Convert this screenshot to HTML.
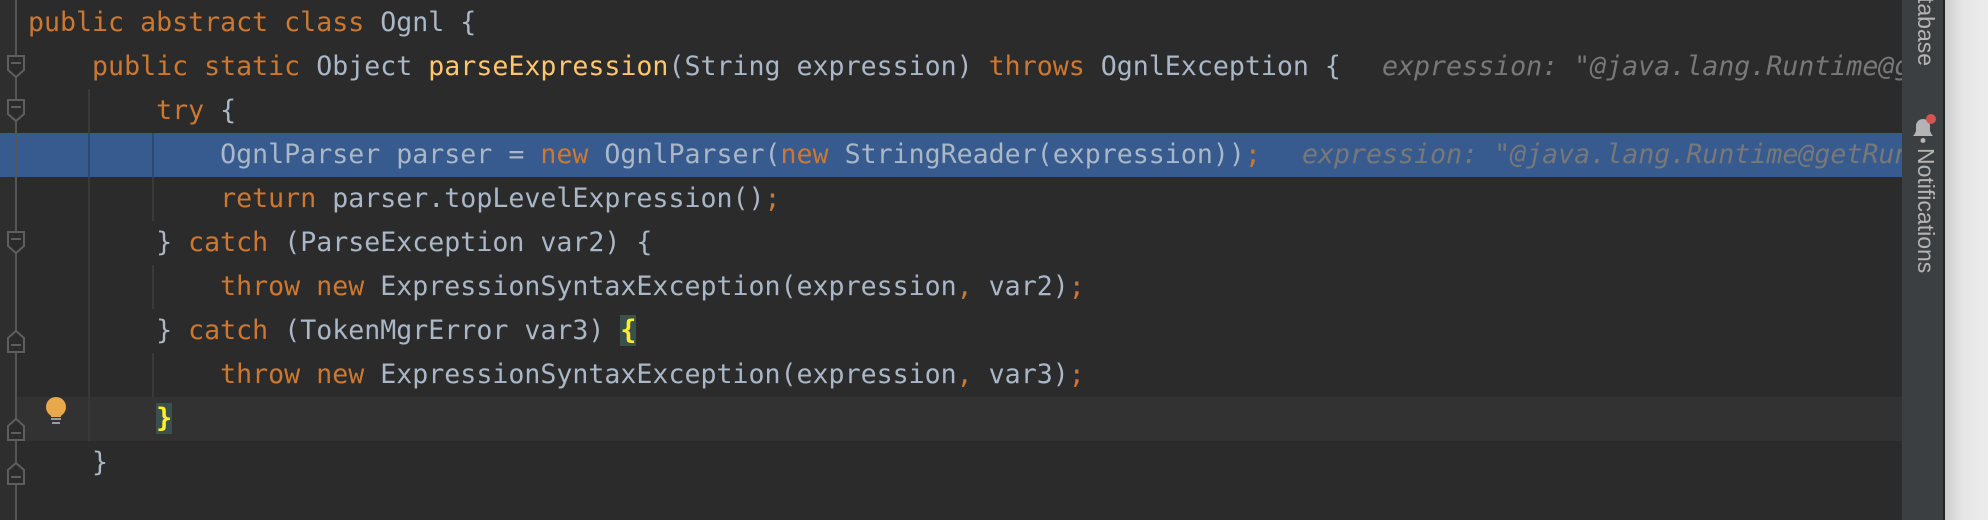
<!DOCTYPE html>
<html><head><meta charset="utf-8"><style>
html,body{margin:0;padding:0;width:1988px;height:520px;overflow:hidden;background:#2b2b2b}
#ed{position:absolute;left:0;top:0;width:1902px;height:520px;background:#2b2b2b;overflow:hidden}
.row{position:absolute;left:0;width:1902px;height:44px}
.t{position:absolute;left:28px;top:0;height:44px;line-height:44px;white-space:pre;font-family:"DejaVu Sans Mono","Liberation Mono",monospace;font-size:26.6px;color:#a9b7c6;letter-spacing:0px}
.k{color:#cc7832}.m{color:#ffc66d}
.h{position:absolute;top:0;line-height:44px;white-space:pre;font-family:"DejaVu Sans Mono","Liberation Mono",monospace;font-size:26.6px;font-style:italic;color:#787878}
.g{position:absolute;width:2px;background:#393939}
.br{background:#3b514d;color:#ffef28;font-weight:bold}
.side{position:absolute;transform-origin:0 0;transform:rotate(90deg);font-family:'Liberation Sans',sans-serif;font-size:23px;color:#b4b4b4;white-space:nowrap;line-height:23px}
</style></head><body>
<div id="ed">
<div style="position:absolute;left:0;top:0;width:16px;height:520px;background:#2e2e2e"></div>
<div class="row" style="top:133px;background:#375a8f"></div>
<div class="row" style="top:397px;background:#323232;left:16px"></div>
<div style="position:absolute;left:15px;top:0;width:2px;height:520px;background:#555"></div>
<div class="g" style="left:88px;top:89px;height:352px"></div>
<div class="g" style="left:152px;top:133px;height:88px"></div>
<div class="g" style="left:152px;top:265px;height:44px"></div>
<div class="g" style="left:152px;top:353px;height:44px"></div>
<div class="g" style="left:88px;top:133px;height:44px;background:#2b4a78"></div>
<div class="g" style="left:152px;top:133px;height:44px;background:#2b4a78"></div>

<div class="row" style="top:1px"><div class="t"><span class="k">public abstract class </span>Ognl {</div></div>
<div class="row" style="top:45px"><div class="t">    <span class="k">public static </span>Object <span class="m">parseExpression</span>(String expression) <span class="k">throws </span>OgnlException {</div><div class="h" style="left:1382px">expression: "@java.lang.Runtime@getRuntime</div></div>
<div class="row" style="top:89px"><div class="t">        <span class="k">try </span>{</div></div>
<div class="row" style="top:133px"><div class="t">            OgnlParser parser = <span class="k">new </span>OgnlParser(<span class="k">new </span>StringReader(expression))<span class="k">;</span></div><div class="h" style="left:1302px">expression: "@java.lang.Runtime@getRuntime</div></div>
<div class="row" style="top:177px"><div class="t">            <span class="k">return </span>parser.topLevelExpression()<span class="k">;</span></div></div>
<div class="row" style="top:221px"><div class="t">        } <span class="k">catch </span>(ParseException var2) {</div></div>
<div class="row" style="top:265px"><div class="t">            <span class="k">throw new </span>ExpressionSyntaxException(expression<span class="k">, </span>var2)<span class="k">;</span></div></div>
<div class="row" style="top:309px"><div class="t">        } <span class="k">catch </span>(TokenMgrError var3) <span class="br">{</span></div></div>
<div class="row" style="top:353px"><div class="t">            <span class="k">throw new </span>ExpressionSyntaxException(expression<span class="k">, </span>var3)<span class="k">;</span></div></div>
<div class="row" style="top:397px"><div class="t">        <span class="br">}</span></div></div>
<div class="row" style="top:441px"><div class="t">    }</div></div>

<svg style="position:absolute;left:0;top:0" width="40" height="520">
<g fill="#2b2b2b" stroke="#5e5e5e" stroke-width="2">
<path d="M8 56 h16 v14 l-8 7 l-8 -7 z"/><path d="M8 100 h16 v14 l-8 7 l-8 -7 z"/><path d="M8 232 h16 v14 l-8 7 l-8 -7 z"/>
<path d="M8 338 l8 -7 l8 7 v14 h-16 z"/><path d="M8 426 l8 -7 l8 7 v14 h-16 z"/><path d="M8 470 l8 -7 l8 7 v14 h-16 z"/>
</g>
<g stroke="#5e5e5e" stroke-width="2"><path d="M11 63h10M11 107h10M11 239h10M11 345h10M11 433h10M11 477h10"/></g>
</svg>
<svg style="position:absolute;left:44px;top:396px" width="24" height="30">
<circle cx="12" cy="11" r="10" fill="#e8a94c"/><rect x="7" y="17" width="10" height="4" fill="#e8a94c"/>
<path d="M7 23h10M8 27h8" stroke="#9a9a9a" stroke-width="2"/>
</svg>
</div>
<div style="position:absolute;left:1902px;top:0;width:41px;height:520px;background:#3c3f41"></div>
<div style="position:absolute;left:1943px;top:0;width:2px;height:520px;background:#242424"></div>
<div style="position:absolute;left:1945px;top:0;width:43px;height:520px;background:linear-gradient(to right,#cccccc,#e6e6e6 40%,#ececec)"></div>
<div class="side" style="left:1937px;top:-3px">tabase</div>
<svg style="position:absolute;left:1910px;top:112px" width="30" height="34"><path d="M3 24 q2-2 3-5 v-5 a7 7 0 0 1 14 0 v5 q1 3 3 5 z" fill="#b4b4b4"/><circle cx="13" cy="28.5" r="2.5" fill="#b4b4b4"/><circle cx="21" cy="7" r="5" fill="#d4544f"/></svg>
<div class="side" style="left:1937px;top:148px">Notifications</div>
</body></html>
